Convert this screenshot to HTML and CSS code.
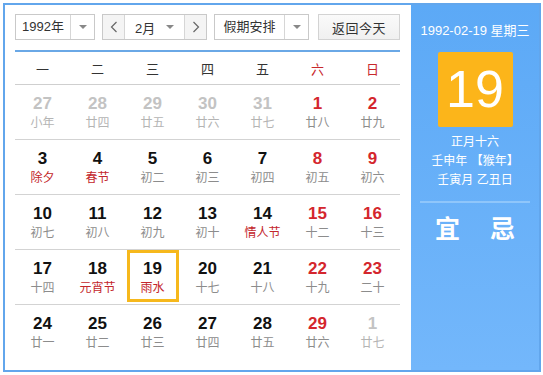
FILE: index.html
```html
<!DOCTYPE html>
<html lang="zh-CN">
<head>
<meta charset="utf-8">
<title>万年历</title>
<link rel="stylesheet" href="styles.css">
</head>
<body>
<div class="cal">
  <div class="main">
    <div class="toolbar">
      <div class="sel sel-year">
        <span class="sel-text">1992年</span>
        <span class="sel-arrow"><i class="tri"></i></span>
      </div>
      <div class="sel sel-month">
        <span class="nav"><svg width="8" height="12" viewBox="0 0 8 12"><polyline points="6.5,1 1.5,6 6.5,11" fill="none" stroke="#666" stroke-width="1.2"/></svg></span>
        <span class="month-text">2月</span>
        <span class="month-arrow"><i class="tri"></i></span>
        <span class="nav nav-r"><svg width="8" height="12" viewBox="0 0 8 12"><polyline points="1.5,1 6.5,6 1.5,11" fill="none" stroke="#666" stroke-width="1.2"/></svg></span>
      </div>
      <div class="sel sel-hol">
        <span class="sel-text">假期安排</span>
        <span class="sel-arrow"><i class="tri"></i></span>
      </div>
      <div class="btn">返回今天</div>
    </div>
    <div class="week">
      <span>一</span><span>二</span><span>三</span><span>四</span><span>五</span><span class="we">六</span><span class="we">日</span>
    </div>
    <div class="grid">
      <div class="row">
        <div class="cell other"><b>27</b><em>小年</em></div>
        <div class="cell other"><b>28</b><em>廿四</em></div>
        <div class="cell other"><b>29</b><em>廿五</em></div>
        <div class="cell other"><b>30</b><em>廿六</em></div>
        <div class="cell other"><b>31</b><em>廿七</em></div>
        <div class="cell wkend"><b>1</b><em>廿八</em></div>
        <div class="cell wkend"><b>2</b><em>廿九</em></div>
      </div>
      <div class="row">
        <div class="cell"><b>3</b><em class="fest">除夕</em></div>
        <div class="cell"><b>4</b><em class="fest">春节</em></div>
        <div class="cell"><b>5</b><em>初二</em></div>
        <div class="cell"><b>6</b><em>初三</em></div>
        <div class="cell"><b>7</b><em>初四</em></div>
        <div class="cell wkend"><b>8</b><em>初五</em></div>
        <div class="cell wkend"><b>9</b><em>初六</em></div>
      </div>
      <div class="row">
        <div class="cell"><b>10</b><em>初七</em></div>
        <div class="cell"><b>11</b><em>初八</em></div>
        <div class="cell"><b>12</b><em>初九</em></div>
        <div class="cell"><b>13</b><em>初十</em></div>
        <div class="cell"><b>14</b><em class="fest">情人节</em></div>
        <div class="cell wkend"><b>15</b><em>十二</em></div>
        <div class="cell wkend"><b>16</b><em>十三</em></div>
      </div>
      <div class="row">
        <div class="cell"><b>17</b><em>十四</em></div>
        <div class="cell"><b>18</b><em class="fest">元宵节</em></div>
        <div class="cell today"><div class="today-box"><b>19</b><em class="fest">雨水</em></div></div>
        <div class="cell"><b>20</b><em>十七</em></div>
        <div class="cell"><b>21</b><em>十八</em></div>
        <div class="cell wkend"><b>22</b><em>十九</em></div>
        <div class="cell wkend"><b>23</b><em>二十</em></div>
      </div>
      <div class="row last">
        <div class="cell"><b>24</b><em>廿一</em></div>
        <div class="cell"><b>25</b><em>廿二</em></div>
        <div class="cell"><b>26</b><em>廿三</em></div>
        <div class="cell"><b>27</b><em>廿四</em></div>
        <div class="cell"><b>28</b><em>廿五</em></div>
        <div class="cell wkend"><b>29</b><em>廿六</em></div>
        <div class="cell other"><b>1</b><em>廿七</em></div>
      </div>
    </div>
  </div>
  <div class="side">
    <div class="side-date">1992-02-19 星期三</div>
    <div class="big-day">19</div>
    <div class="lunar">
      <div>正月十六</div>
      <div>壬申年 【猴年】</div>
      <div>壬寅月 乙丑日</div>
    </div>
    <div class="yiji"><span>宜</span><span>忌</span></div>
  </div>
</div>
</body>
</html>
```

FILE: styles.css
```css
html, body {
  margin: 0;
  padding: 0;
  background: #fff;
}
body {
  font-family: "Liberation Sans", "Noto Sans CJK SC", sans-serif;
  color: #333;
}
.cal {
  margin: 3px 0 0 3px;
  width: 534px;
  height: 365px;
  border: 2px solid #62a6ec;
  display: flex;
}
.main {
  width: 385px;
  padding: 9px 11px 0 10px;
  background: #fff;
}
.toolbar {
  display: flex;
  height: 26px;
  margin-bottom: 10px;
}
.sel {
  box-sizing: border-box;
  height: 26px;
  border: 1px solid #c9c9c9;
  background: #fff;
  display: flex;
  align-items: stretch;
  font-size: 13px;
  color: #333;
}
.sel-year { width: 80px; margin-right: 7px; }
.sel-month { width: 105px; margin-right: 7px; }
.sel-hol { width: 95px; margin-right: 9px; }
.sel-text {
  flex: 1;
  display: flex;
  align-items: center;
  justify-content: center;
  border-right: 1px solid #d6d6d6;
  line-height: 24px;
}
.sel-arrow {
  width: 23px;
  display: flex;
  align-items: center;
  justify-content: center;
}
.tri {
  display: block;
  width: 0;
  height: 0;
  border-left: 4px solid transparent;
  border-right: 4px solid transparent;
  border-top: 4px solid #888;
}
.nav {
  width: 21px;
  background: #f4f4f4;
  border-right: 1px solid #d6d6d6;
  display: flex;
  align-items: center;
  justify-content: center;
}
.nav-r {
  border-right: 0;
  border-left: 1px solid #d6d6d6;
}
.month-text {
  flex: 1;
  display: flex;
  align-items: center;
  padding-left: 10px;
}
.month-arrow {
  width: 18px;
  display: flex;
  align-items: center;
  justify-content: flex-start;
}
.btn {
  box-sizing: border-box;
  width: 82px;
  height: 26px;
  border: 1px solid #d3d3d3;
  background: linear-gradient(#fafafa, #f0f0f0);
  font-size: 13px;
  color: #333;
  display: flex;
  align-items: center;
  justify-content: center;
  letter-spacing: 0.5px;
}
.week {
  display: grid;
  grid-template-columns: repeat(7, 55px);
  border-top: 2px solid #6aa8e6;
  border-bottom: 1px solid #cfcfcf;
  height: 32px;
  align-items: center;
  font-size: 13px;
  color: #333;
}
.week span { text-align: center; }
.week .we { color: #c8282c; }
.grid {
  display: flex;
  flex-direction: column;
}
.row {
  display: grid;
  grid-template-columns: repeat(7, 55px);
  height: 54px;
  border-bottom: 1px solid #d3d3d3;
}
.row.last { border-bottom: 0; }
.cell {
  display: flex;
  flex-direction: column;
  align-items: center;
  padding-top: 9px;
}
.cell b {
  display: block;
  font-size: 17px;
  font-weight: bold;
  line-height: 20px;
  color: #111;
}
.cell em {
  display: block;
  font-style: normal;
  font-size: 12px;
  line-height: 18px;
  color: #8c8c8c;
}
.cell.wkend b { color: #d4262d; }
.cell.other b { color: #c3c3c3; }
.cell.other em { color: #b4b4b4; }
.cell em.fest { color: #c3262b; }
.cell.today {
  padding-top: 0;
}
.today-box {
  box-sizing: border-box;
  width: 52px;
  height: 52px;
  border: 3px solid #f6b81c;
  display: flex;
  flex-direction: column;
  align-items: center;
  padding-top: 6px;
}
.side {
  flex: 1;
  background: linear-gradient(#5ca9f6, #73b7fb);
  color: #fff;
  display: flex;
  flex-direction: column;
  align-items: center;
}
.side-date {
  margin-top: 17px;
  font-size: 13px;
  line-height: 18px;
}
.big-day {
  margin-top: 12px;
  width: 75px;
  height: 75px;
  background: #fcb51a;
  border-radius: 2px;
  font-size: 52px;
  line-height: 75px;
  text-align: center;
  color: #fff;
}
.lunar {
  margin-top: 6px;
  font-size: 12px;
  line-height: 19px;
  text-align: center;
  width: 110px;
  padding-bottom: 11px;
  border-bottom: 2px solid #8fc6fb;
}
.yiji {
  margin-top: 11px;
  width: 110px;
  display: flex;
  justify-content: space-around;
  font-size: 25px;
  font-weight: bold;
  line-height: 30px;
}
```
